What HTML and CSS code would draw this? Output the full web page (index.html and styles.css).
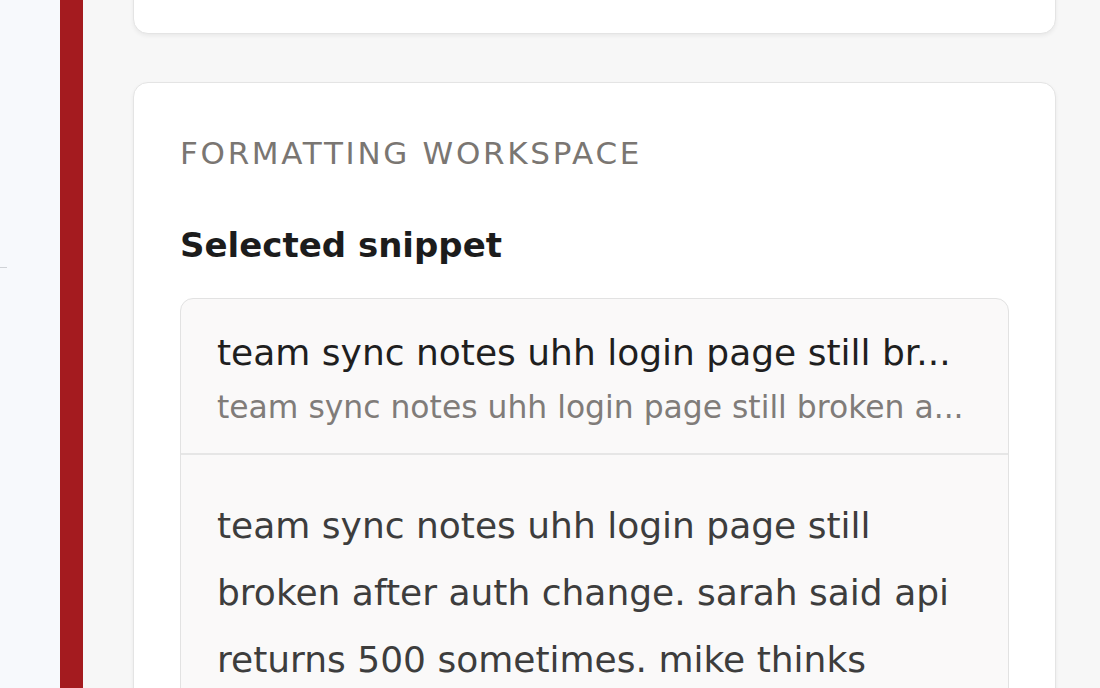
FILE: index.html
```html
<!DOCTYPE html>
<html lang="en">
<head>
    <meta charset="UTF-8">
    <meta name="viewport" content="width=device-width, initial-scale=1.0">
    <title>Formatting Workspace</title>
    <link rel="stylesheet" href="styles.css">
</head>
<body>
    <div class="app">
        <aside class="rail">
            <span class="rail-tick"></span>
        </aside>
        <div class="accent"></div>
        <main class="content">
            <section class="card card-prev"></section>
            <section class="card workspace">
                <p class="eyebrow">Formatting workspace</p>
                <h2 class="workspace-title">Selected snippet</h2>
                <div class="snippet">
                    <div class="snippet-head">
                        <div class="snippet-title">team sync notes uhh login page still br...</div>
                        <div class="snippet-sub">team sync notes uhh login page still broken a...</div>
                    </div>
                    <div class="snippet-body">
                        team sync notes uhh login page still broken after auth change. sarah said api returns 500 sometimes. mike thinks session tokens expire too early. need to check logs before friday.
                    </div>
                </div>
            </section>
        </main>
    </div>
</body>
</html>
```

FILE: styles.css
```css
html, body {
    margin: 0;
    height: 100%;
    overflow: hidden;
}
body {
    font-family: "DejaVu Sans", "Liberation Sans", Arial, sans-serif;
    background-color: #f7f7f7;
    color: #1c1c1c;
}
.app {
    display: flex;
    height: 100%;
}
.rail {
    width: 60px;
    flex-shrink: 0;
    background-color: #f7f9fc;
    padding-top: 267px;
    box-sizing: border-box;
}
.rail-tick {
    display: block;
    width: 7px;
    height: 1px;
    background-color: #cfd2d6;
}
.accent {
    width: 23px;
    flex-shrink: 0;
    background-color: #a41b1f;
}
.content {
    flex-grow: 1;
    min-width: 0;
    padding: 0 44px 0 50px;
}
.card {
    background-color: white;
    border: 1px solid #e4e4e4;
    border-radius: 15px;
    box-shadow: 0 2px 4px rgba(0,0,0,0.06);
}
.card-prev {
    height: 92px;
    margin-top: -60px;
    margin-bottom: 48px;
}
.workspace {
    padding: 50px 46px 40px;
}
.eyebrow {
    margin: 0;
    font-size: 31px;
    line-height: 40px;
    letter-spacing: 2.7px;
    text-transform: uppercase;
    color: #7a7672;
}
.workspace-title {
    margin: 50px 0 31px;
    font-size: 34px;
    line-height: 44px;
    font-weight: bold;
    color: #1c1c1c;
}
.snippet {
    background-color: #faf9f9;
    border: 1px solid #e2e2e2;
    border-radius: 13px;
}
.snippet-head {
    padding: 32px 36px 26px;
    border-bottom: 2px solid #e6e6e6;
}
.snippet-title,
.snippet-sub {
    white-space: nowrap;
    overflow: hidden;
    text-overflow: ellipsis;
}
.snippet-title {
    font-size: 36px;
    line-height: 44px;
    color: #1f1f1f;
}
.snippet-sub {
    margin-top: 12px;
    font-size: 31.4px;
    line-height: 40px;
    color: #807c79;
}
.snippet-body {
    padding: 37px 36px;
    font-size: 36px;
    line-height: 67px;
    color: #3d3d3d;
}
```
